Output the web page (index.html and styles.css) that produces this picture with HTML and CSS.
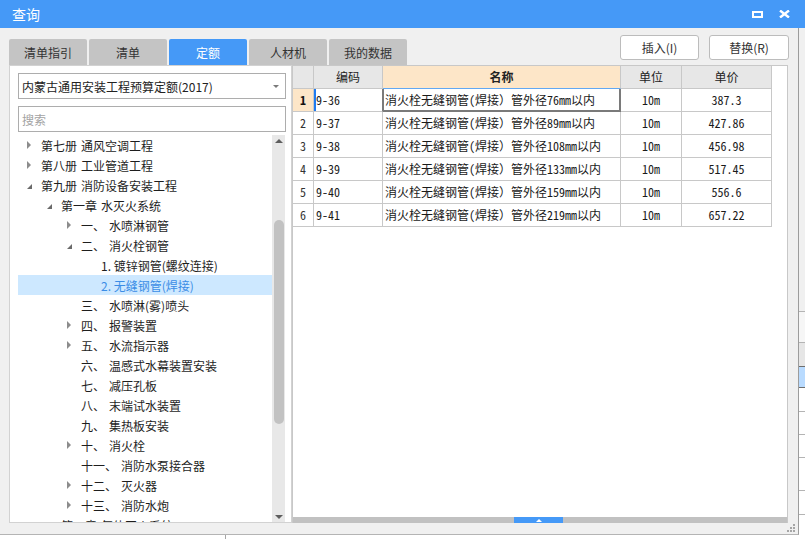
FILE: index.html
```html
<!DOCTYPE html>
<html lang="zh-CN">
<head>
<meta charset="utf-8">
<title>查询</title>
<link rel="stylesheet" href="styles.css">
</head>
<body>
<div class="window">
  <header class="titlebar">
    <span class="title">查询</span>
    <div class="win-controls">
      <span class="ctl-max"></span>
      <svg class="ctl-close" width="11" height="8" viewBox="0 0 11 8"><path d="M1 0.5 L10 7.5 M10 0.5 L1 7.5" stroke="#fff" stroke-width="2.4" fill="none"/></svg>
    </div>
  </header>
  <div class="content">
    <div class="dialog">
      <div class="toolbar">
        <nav class="tabs">
          <span class="tab">清单指引</span>
          <span class="tab">清单</span>
          <span class="tab active">定额</span>
          <span class="tab">人材机</span>
          <span class="tab">我的数据</span>
        </nav>
        <div class="actions">
          <button class="btn btn-a">插入(I)</button>
          <button class="btn btn-b">替换(R)</button>
        </div>
      </div>
      <div class="main">
        <aside class="left">
          <div class="select"><span>内蒙古通用安装工程预算定额(2017)</span><span class="caret"></span></div>
          <div class="search">搜索</div>
          <div class="tree-wrap">
            <ul class="tree">
              <li class="row l0"><span class="twisty"><i class="closed"></i></span><span class="num">第七册</span>通风空调工程</li>
              <li class="row l0"><span class="twisty"><i class="closed"></i></span><span class="num">第八册</span>工业管道工程</li>
              <li class="row l0"><span class="twisty"><i class="open"></i></span><span class="num">第九册</span>消防设备安装工程</li>
              <li class="row l1"><span class="twisty"><i class="open"></i></span><span class="num">第一章</span>水灭火系统</li>
              <li class="row l2"><span class="twisty"><i class="closed"></i></span><span class="num">一、</span>水喷淋钢管</li>
              <li class="row l2"><span class="twisty"><i class="open"></i></span><span class="num">二、</span>消火栓钢管</li>
              <li class="row l3"><span class="twisty"></span>1. 镀锌钢管(螺纹连接)</li>
              <li class="row l3 sel"><span class="twisty"></span>2. 无缝钢管(焊接)</li>
              <li class="row l2"><span class="twisty"></span><span class="num">三、</span>水喷淋(雾)喷头</li>
              <li class="row l2"><span class="twisty"><i class="closed"></i></span><span class="num">四、</span>报警装置</li>
              <li class="row l2"><span class="twisty"><i class="closed"></i></span><span class="num">五、</span>水流指示器</li>
              <li class="row l2"><span class="twisty"></span><span class="num">六、</span>温感式水幕装置安装</li>
              <li class="row l2"><span class="twisty"></span><span class="num">七、</span>减压孔板</li>
              <li class="row l2"><span class="twisty"></span><span class="num">八、</span>末端试水装置</li>
              <li class="row l2"><span class="twisty"></span><span class="num">九、</span>集热板安装</li>
              <li class="row l2"><span class="twisty"><i class="closed"></i></span><span class="num">十、</span>消火栓</li>
              <li class="row l2"><span class="twisty"></span><span class="num">十一、</span>消防水泵接合器</li>
              <li class="row l2"><span class="twisty"><i class="closed"></i></span><span class="num">十二、</span>灭火器</li>
              <li class="row l2"><span class="twisty"><i class="closed"></i></span><span class="num">十三、</span>消防水炮</li>
              <li class="row l1"><span class="twisty"><i class="open"></i></span><span class="num">第二章</span>气体灭火系统</li>
            </ul>
            <div class="vscroll">
              <span class="arr arr-up"></span>
              <span class="thumb"></span>
              <span class="vspace"></span>
              <span class="arr arr-down"></span>
            </div>
          </div>
        </aside>
        <section class="right">
          <div class="grid">
            <div class="c hd rn"></div>
            <div class="c hd">编码</div>
            <div class="c hd cur">名称</div>
            <div class="c hd">单位</div>
            <div class="c hd">单价</div>

            <div class="c rn cur">1</div>
            <div class="c code focus">9-36</div>
            <div class="c name selcell">消火栓无缝钢管(焊接）管外径76mm以内</div>
            <div class="c ctr">10m</div>
            <div class="c ctr">387.3</div>

            <div class="c rn">2</div>
            <div class="c code">9-37</div>
            <div class="c name">消火栓无缝钢管(焊接）管外径89mm以内</div>
            <div class="c ctr">10m</div>
            <div class="c ctr">427.86</div>

            <div class="c rn">3</div>
            <div class="c code">9-38</div>
            <div class="c name">消火栓无缝钢管(焊接）管外径108mm以内</div>
            <div class="c ctr">10m</div>
            <div class="c ctr">456.98</div>

            <div class="c rn">4</div>
            <div class="c code">9-39</div>
            <div class="c name">消火栓无缝钢管(焊接）管外径133mm以内</div>
            <div class="c ctr">10m</div>
            <div class="c ctr">517.45</div>

            <div class="c rn">5</div>
            <div class="c code">9-40</div>
            <div class="c name">消火栓无缝钢管(焊接）管外径159mm以内</div>
            <div class="c ctr">10m</div>
            <div class="c ctr">556.6</div>

            <div class="c rn">6</div>
            <div class="c code">9-41</div>
            <div class="c name">消火栓无缝钢管(焊接）管外径219mm以内</div>
            <div class="c ctr">10m</div>
            <div class="c ctr">657.22</div>
          </div>
          <div class="grid-fill"></div>
          <div class="hscroll"><span class="hthumb"><span class="tri"></span></span></div>
        </section>
      </div>
      <div class="footer">
        <svg class="grip" width="9" height="8" viewBox="0 0 9 8">
          <rect x="6" y="0" width="2" height="2" fill="#a6a6a6"/>
          <rect x="3" y="3" width="2" height="2" fill="#a6a6a6"/>
          <rect x="6" y="3" width="2" height="2" fill="#a6a6a6"/>
          <rect x="0" y="6" width="2" height="2" fill="#a6a6a6"/>
          <rect x="3" y="6" width="2" height="2" fill="#a6a6a6"/>
          <rect x="6" y="6" width="2" height="2" fill="#a6a6a6"/>
        </svg>
      </div>
    </div>
    <div class="side">
      <div class="s-top"></div>
      <div class="s-a"></div>
      <div class="s-b"></div>
      <div class="s-sel"></div>
      <div class="s-r24"></div>
      <div class="s-r23"></div>
      <div class="s-r23"></div>
      <div class="s-r33"></div>
      <div class="s-r24"></div>
      <div class="s-rest"></div>
    </div>
  </div>
  <div class="bottom"><span class="bottom-cell"></span></div>
</div>
</body>
</html>
```

FILE: styles.css
```css
* { box-sizing: border-box; margin: 0; padding: 0; }
html, body { width: 805px; height: 539px; overflow: hidden; background: #fff; }
body {
  font-family: "Noto Sans CJK SC", "Noto Sans", sans-serif;
  font-size: 12px;
  color: #222;
}
.window { width: 805px; height: 539px; display: flex; flex-direction: column; }

/* title bar */
.titlebar {
  height: 28px; flex: none;
  background: #4599f7; color: #fff;
  display: flex; align-items: center;
  padding-left: 12px;
}
.title { font-size: 14px; line-height: 1; }
.win-controls { margin-left: auto; display: flex; align-items: center; gap: 16px; padding-right: 15px; }
.ctl-max { width: 11px; height: 7px; border: 2px solid #fff; display: block; }
.ctl-close { display: block; }

/* content */
.content { height: 507px; display: flex; flex: none; }
.dialog {
  width: 799px; flex: none;
  background: #f0f0f0;
  border-right: 1px solid #9c9c9c;
  border-bottom: 1px solid #b4b4b4;
  display: flex; flex-direction: column;
}
.toolbar { height: 37px; flex: none; display: flex; padding: 0 9px; }
.tabs { display: flex; gap: 2px; align-self: flex-end; }
.tab {
  width: 78px; height: 26px;
  background: #c4c4c4; color: #333;
  display: flex; align-items: center; justify-content: center;
  border-radius: 2px 2px 0 0;
}
.tab.active { background: #4599f7; color: #fff; }
.actions { margin-left: auto; display: flex; gap: 10px; margin-top: 7px; height: 25px; }
.btn {
  height: 25px; background: #fff; color: #333;
  border: 1px solid #bcbcbc; border-radius: 3px;
  font: inherit; font-size: 12px;
}
.btn-a { width: 79px; }
.btn-b { width: 80px; }

.main { height: 458px; flex: none; display: flex; padding-left: 9px; }

/* left panel */
.left {
  width: 283px; flex: none;
  background: #fff;
  border: 1px solid #d2d2d2;
  padding: 7px 5px 0 8px;
  display: flex; flex-direction: column;
}
.select {
  height: 26px; flex: none;
  border: 1px solid #adadad;
  display: flex; align-items: center;
  padding: 0 6px 0 3px;
  color: #222;
}
.caret {
  margin-left: auto;
  width: 0; height: 0;
  border-left: 3px solid transparent; border-right: 3px solid transparent;
  border-top: 3px solid #7a7a7a;
}
.search {
  height: 26px; flex: none; margin-top: 7px;
  border: 1px solid #adadad;
  display: flex; align-items: center; padding-left: 3px;
  color: #a3a3a3;
}
.tree-wrap { flex: 1; min-height: 0; margin-top: 3px; display: flex; overflow: hidden; margin-right: 1px; }
.tree { flex: 1; list-style: none; padding-top: 0; overflow: hidden; }
.row { height: 20px; flex: none; display: flex; align-items: center; white-space: nowrap; color: #1e1e1e; }
.row.l0 { padding-left: 9px; }
.row.l1 { padding-left: 29px; }
.row.l2 { padding-left: 49px; }
.row.l3 { padding-left: 69px; }
.row.sel { background: #cde8ff; color: #3b8de6; }
.twisty { width: 14px; flex: none; display: flex; align-items: center; height: 20px; }
.num { margin-right: 4px; }
.closed {
  display: block; width: 0; height: 0;
  border-top: 4px solid transparent; border-bottom: 4px solid transparent;
  border-left: 4px solid #8c8c8c;
}
.open {
  display: block; width: 0; height: 0;
  border-left: 5px solid transparent;
  border-bottom: 5px solid #6a6a6a;
  margin-top: 2px;
}
.vscroll {
  width: 13px; flex: none;
  background: #e8e8e8;
  display: flex; flex-direction: column; align-items: center;
}
.arr { display: block; width: 0; height: 0; border-left: 4px solid transparent; border-right: 4px solid transparent; flex: none; }
.arr-up { border-bottom: 4px solid #5e5e5e; margin-top: 4px; }
.arr-down { border-top: 4px solid #5e5e5e; margin-bottom: 3px; }
.thumb { width: 10px; height: 204px; background: #c2c2c2; border-radius: 5px; margin-top: 77px; flex: none; }
.vspace { flex: 1; }

/* right panel */
.right {
  width: 496px; flex: none;
  background: #fff;
  border: 1px solid #c8c8c8; border-bottom: none;
  display: flex; flex-direction: column;
}
.grid {
  display: grid;
  grid-template-columns: 21px 69px 238px 61px 90px;
  grid-auto-rows: 23px;
  width: 479px;
}
.c {
  border-right: 1px solid #c8c8c8;
  border-bottom: 1px solid #c8c8c8;
  padding: 0 2px;
  line-height: 22px;
  white-space: nowrap; overflow: hidden;
  font-family: "Noto Sans Mono CJK SC", "Noto Sans CJK SC", "Liberation Mono", monospace;
  font-size: 12px;
  color: #1a1a1a;
}
.c.hd {
  background: #e7e7e7; text-align: center;
  font-family: "Noto Sans CJK SC", sans-serif;
  color: #222;
}
.c.hd.cur { background: #fde6c8; font-weight: bold; border-bottom-color: #62a8f2; }
.c.rn { text-align: center; padding: 0; color: #333; }
.c.rn.cur { background: #fde6c8; font-weight: bold; color: #111; }
.c.code.focus { box-shadow: inset 2px 0 0 #1f7bf0; border-right-color: #7a7a7a; }
.c.selcell {
  border-right-color: #7a7a7a; border-bottom-color: #7a7a7a;
  box-shadow: inset 1px 0 0 #7a7a7a, inset -1px 0 0 #7a7a7a, inset 0 -1px 0 #7a7a7a;
}
.c.ctr { text-align: center; }
.grid-fill { flex: 1; }
.hscroll { height: 6px; flex: none; background: #c1c1c1; display: flex; }
.hthumb {
  margin-left: 221px; width: 49px; height: 6px;
  background: #4599f7;
  display: flex; align-items: center; justify-content: center;
}
.tri {
  width: 0; height: 0;
  border-left: 3px solid transparent; border-right: 3px solid transparent;
  border-bottom: 3px solid #fff;
}

.footer { flex: 1; display: flex; justify-content: flex-end; align-items: flex-start; padding: 1px 2px 0 0; }
.grip { display: block; }

/* partially visible panel behind, on the right */
.side { flex: 1; display: flex; flex-direction: column; background: #fff; }
.s-top { height: 284px; background: #f0f0f0; border-bottom: 1px solid #b4b4b4; }
.s-a { height: 31px; background: #f6f6f6; border-bottom: 1px solid #b4b4b4; }
.s-b { height: 24px; background: #e6e6e6; border-bottom: 1px solid #6e6e6e; }
.s-sel { height: 21px; background: #b9dbff; border-bottom: 1px solid #6e6e6e; }
.s-r24 { height: 24px; border-bottom: 1px solid #b4b4b4; }
.s-r23 { height: 23px; border-bottom: 1px solid #b4b4b4; }
.s-r33 { height: 33px; border-bottom: 1px solid #b4b4b4; }
.s-rest { flex: 1; }

.bottom { height: 4px; flex: none; background: #fff; display: flex; }
.bottom-cell { width: 226px; border-right: 1px solid #a6a6a6; }
```
